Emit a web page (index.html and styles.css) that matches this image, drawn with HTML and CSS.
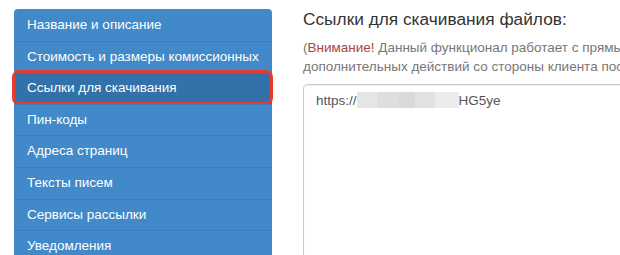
FILE: index.html
```html
<!DOCTYPE html>
<html lang="ru">
<head>
  <meta charset="UTF-8">
  <meta name="viewport" content="width=device-width, initial-scale=1.0">
  <title>Ссылки для скачивания</title>
  <link rel="stylesheet" href="styles.css">
</head>
<body>

  <div class="page">
    <!-- Меню настроек -->
    <div class="side-menu">
      <a href="#" class="menu-item">Название и описание</a>
      <a href="#" class="menu-item">Стоимость и размеры комиссионных</a>
      <a href="#" class="menu-item active">Ссылки для скачивания</a>
      <a href="#" class="menu-item">Пин-коды</a>
      <a href="#" class="menu-item">Адреса страниц</a>
      <a href="#" class="menu-item">Тексты писем</a>
      <a href="#" class="menu-item">Сервисы рассылки</a>
      <a href="#" class="menu-item">Уведомления</a>
    </div>

    <!-- Содержимое раздела -->
    <div class="content">
      <h3 class="title">Ссылки для скачивания файлов:</h3>
      <p class="notice">(<span class="warn">Внимание!</span> Данный функционал работает с прямыми ссылками на файлы, без каких-либо<br>дополнительных действий со стороны клиента после оплаты)</p>
      <div class="links-box">https://<span class="blur"><span class="b1"></span><span class="b2"></span><span class="b3"></span><span class="b4"></span><span class="b5"></span></span>HG5ye</div>
    </div>
  </div>

</body>
</html>
```

FILE: styles.css
```css
/* Общие стили страницы */
body {
  margin: 0;
  padding: 0;
  background-color: #fff;
  font-family: "Liberation Sans", Arial, sans-serif;
  font-size: 13.5px;
  color: #333;
  overflow: hidden;
}

.page {
  display: flex;
  align-items: flex-start;
  gap: 31px;
  padding: 9px 0 0 14px;
}

/* Левое меню */
.side-menu {
  width: 258px;
  flex-shrink: 0;
  display: flex;
  flex-direction: column;
  background-color: #4189c8;
  border-radius: 4px 4px 0 0;
}

.menu-item {
  position: relative;
  display: block;
  padding: 6px 13px;
  line-height: 18.6px;
  color: #fff;
  text-decoration: none;
  white-space: nowrap;
  border-top: 1px solid #3a7dbd;
}

.menu-item:first-child {
  border-top: none;
  padding-top: 6.5px;
  padding-bottom: 6.5px;
  border-radius: 4px 4px 0 0;
}

.menu-item.active {
  background-color: #3271aa;
}

/* Красная рамка поверх активного пункта */
.menu-item.active::after {
  content: "";
  position: absolute;
  top: -3px;
  left: -2px;
  right: -1px;
  bottom: -1.5px;
  border: 3.5px solid #e43b33;
  border-radius: 7px;
}

/* Правая часть */
.content {
  flex: 1;
  min-width: 0;
  white-space: nowrap;
}

.title {
  margin: 0;
  font-size: 17.3px;
  font-weight: normal;
  line-height: 20px;
  color: #333;
}

.notice {
  margin: 9px 0 0;
  font-size: 13.5px;
  line-height: 19px;
  color: #777;
}

.warn {
  color: #a94442;
}

.links-box {
  margin-top: 8px;
  width: 400px;
  height: 190px;
  padding: 6px 12px;
  border: 1px solid #ccc;
  border-radius: 4px;
  box-shadow: inset 0 1px 1px rgba(0, 0, 0, 0.075);
  font-size: 13.5px;
  line-height: 20px;
  color: #555;
}

/* Замазанная часть ссылки */
.blur {
  display: inline-flex;
  vertical-align: -3px;
  height: 16px;
}

.blur span {
  display: block;
  height: 16px;
}

.b1 { width: 20px; background-color: #e6e6e6; }
.b2 { width: 22px; background-color: #dedede; }
.b3 { width: 16px; background-color: #d9d9d9; }
.b4 { width: 20px; background-color: #e2e2e2; }
.b5 { width: 24px; background-color: #ececec; }
```
